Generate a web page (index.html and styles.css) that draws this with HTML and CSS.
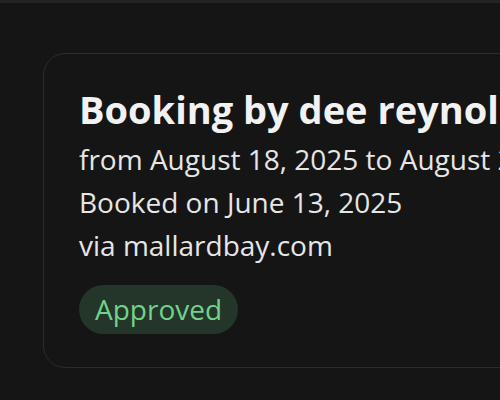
FILE: index.html
```html
<!DOCTYPE html>
<html lang="en">
<head>
    <meta charset="UTF-8">
    <meta name="viewport" content="width=device-width, initial-scale=1.0">
    <title>Booking</title>
    <link rel="stylesheet" href="styles.css">
</head>
<body>
    <div class="top-bar"></div>

    <div class="page">
        <!-- Booking card -->
        <div class="booking-card">
            <h1 class="booking-title">Booking by dee reynolds</h1>
            <div class="booking-line">from August 18, 2025 to August 21, 2025</div>
            <div class="booking-line">Booked on June 13, 2025</div>
            <div class="booking-line">via mallardbay.com</div>
            <span class="status-badge">Approved</span>
        </div>
    </div>
</body>
</html>
```

FILE: styles.css
```css
body {
    margin: 0;
    background-color: #151515;
    color: #ececec;
    font-family: "Open Sans", "Noto Sans", sans-serif;
    overflow: hidden;
    height: 400px;
}

.top-bar {
    height: 3px;
    background-color: #232323;
}

.page {
    padding: 50px 0 0 43px;
}

.booking-card {
    width: 720px;
    padding: 31px 35px 33px 35px;
    border: 1px solid #2c2c2c;
    border-radius: 22px;
    background-color: #151515;
}

.booking-title {
    margin: 0 0 5px 0;
    font-size: 38px;
    line-height: 48px;
    font-weight: 700;
    color: #f2f2f2;
    white-space: nowrap;
}

.booking-line {
    font-size: 28px;
    line-height: 43px;
    color: #e6e6e6;
    white-space: nowrap;
}

.status-badge {
    display: inline-block;
    margin-top: 18px;
    padding: 0 16px;
    height: 49px;
    line-height: 49px;
    font-size: 28px;
    color: #72d18a;
    background-color: #233629;
    border-radius: 25px;
}
```
